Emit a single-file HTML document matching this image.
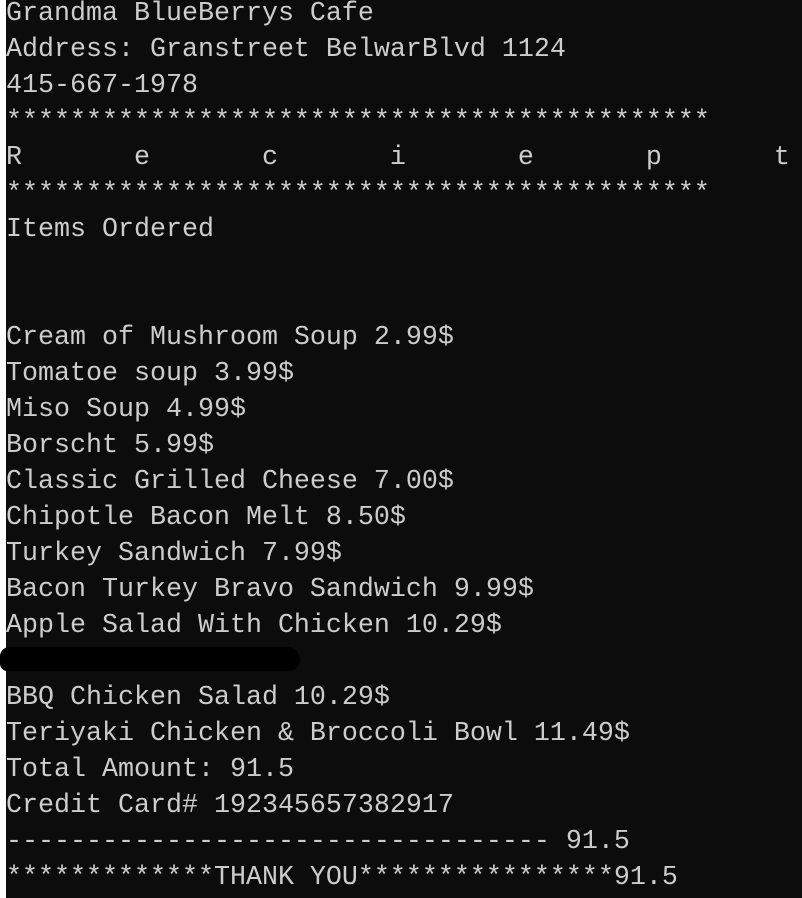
<!DOCTYPE html>
<html><head><meta charset="utf-8"><style>
html,body{margin:0;padding:0;}
body{width:802px;height:898px;background:#0c0c0c;position:relative;overflow:hidden;}
.strip{position:absolute;left:0;top:0;width:6px;height:898px;background:#fff;}
pre{position:absolute;left:6px;top:-4px;margin:0;font-family:"Liberation Mono",monospace;font-size:26.67px;line-height:36px;color:#cccccc;}
.blob{position:absolute;left:0;top:647px;width:300px;height:24px;background:#000;border-radius:10px 14px 12px 8px;}
</style></head><body>
<div class="strip"></div>
<pre>Grandma BlueBerrys Cafe
Address: Granstreet BelwarBlvd 1124
415-667-1978
********************************************
R       e       c       i       e       p       t
********************************************
Items Ordered


Cream of Mushroom Soup 2.99$
Tomatoe soup 3.99$
Miso Soup 4.99$
Borscht 5.99$
Classic Grilled Cheese 7.00$
Chipotle Bacon Melt 8.50$
Turkey Sandwich 7.99$
Bacon Turkey Bravo Sandwich 9.99$
Apple Salad With Chicken 10.29$

BBQ Chicken Salad 10.29$
Teriyaki Chicken &amp; Broccoli Bowl 11.49$
Total Amount: 91.5
Credit Card# 192345657382917
---------------------------------- 91.5
*************THANK YOU****************91.5</pre>
<div class="blob"></div>
</body></html>
